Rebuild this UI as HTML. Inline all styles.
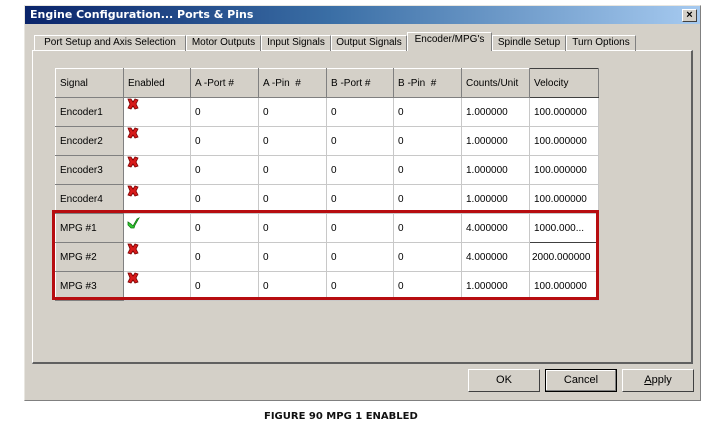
<!DOCTYPE html><html><head><style>
*{margin:0;padding:0;box-sizing:border-box}
body{width:720px;height:425px;background:#fff;position:relative;overflow:hidden;font-family:"Liberation Sans",sans-serif;font-size:10px;color:#000}
.a{position:absolute}
.win{left:24px;top:5px;width:677px;height:396px;background:#d4d0c8;border:1px solid #808080;border-top-color:#e8e6e0;border-left-color:#e8e6e0}
.title{left:25px;top:6px;width:675px;height:18px;background:linear-gradient(90deg,#0a246a,#3a6ea5 45%,#a6caf0);color:#fff;font-weight:bold;font-size:11px;line-height:18px;padding-left:5px;font-family:"DejaVu Sans",sans-serif}
.x{left:682px;top:9px;width:15px;height:13px;background:#d4d0c8;border:1px solid #404040;border-top-color:#fff;border-left-color:#fff;font-size:11px;font-weight:bold;text-align:center;line-height:11px}
.tab{top:35px;height:16px;border:1px solid #fff;border-right-color:#808080;border-bottom:none;line-height:14px;text-align:center;white-space:nowrap}
.panel{left:32px;top:50px;width:661px;height:314px;border:1px solid #fff;border-right:2px solid #606060;border-bottom:2px solid #606060}
table{position:absolute;left:55px;top:68px;border-collapse:collapse;table-layout:fixed}
td{border:1px solid #c8c8c8;height:29px;padding-left:4px;background:#fff;white-space:nowrap;overflow:hidden}
tr:first-child td{background:#d4d0c8;border-color:#808080;border-top-color:#fff;border-left-color:#fff}
td:first-child{background:#d4d0c8;border-color:#fff #808080 #808080 #fff}
.red{left:52px;top:210px;width:547px;height:90px;border:3px solid #b70d10}
.btn{top:369px;width:72px;height:23px;border:1px solid #404040;border-top-color:#fff;border-left-color:#fff;text-align:center;line-height:21px;font-size:11px}
</style></head><body>
<div class="a win"></div>
<div class="a title">Engine Configuration... Ports &amp; Pins</div>
<div class="a x">×</div>
<div class="a panel"></div>
<div class="a tab" style="left:34px;width:152px">Port Setup and Axis Selection</div>
<div class="a tab" style="left:186px;width:75px">Motor Outputs</div>
<div class="a tab" style="left:261px;width:70px">Input Signals</div>
<div class="a tab" style="left:331px;width:76px">Output Signals</div>
<div class="a tab" style="left:407px;width:85px;top:32px;height:19px;background:#d4d0c8;border-bottom:none">Encoder/MPG's</div>
<div class="a tab" style="left:492px;width:74px">Spindle Setup</div>
<div class="a tab" style="left:566px;width:70px">Turn Options</div>
<table>
<colgroup><col style="width:68px"><col style="width:67px"><col style="width:68px"><col style="width:68px"><col style="width:67px"><col style="width:68px"><col style="width:68px"><col style="width:69px"></colgroup>
<tr><td>Signal</td><td>Enabled</td><td>A -Port #</td><td>A -Pin &nbsp;#</td><td>B -Port #</td><td>B -Pin &nbsp;#</td><td>Counts/Unit</td><td style="border:1px solid #404040;border-right-color:#808080">Velocity</td></tr>
<tr><td>Encoder1</td><td></td><td>0</td><td>0</td><td>0</td><td>0</td><td>1.000000</td><td>100.000000</td></tr>
<tr><td>Encoder2</td><td></td><td>0</td><td>0</td><td>0</td><td>0</td><td>1.000000</td><td>100.000000</td></tr>
<tr><td>Encoder3</td><td></td><td>0</td><td>0</td><td>0</td><td>0</td><td>1.000000</td><td>100.000000</td></tr>
<tr><td>Encoder4</td><td></td><td>0</td><td>0</td><td>0</td><td>0</td><td>1.000000</td><td>100.000000</td></tr>
<tr><td>MPG #1</td><td></td><td>0</td><td>0</td><td>0</td><td>0</td><td>4.000000</td><td style="border:1px solid #404040">1000.000...</td></tr>
<tr><td>MPG #2</td><td></td><td>0</td><td>0</td><td>0</td><td>0</td><td>4.000000</td><td style="padding-left:2px">2000.000000</td></tr>
<tr><td>MPG #3</td><td></td><td>0</td><td>0</td><td>0</td><td>0</td><td>1.000000</td><td>100.000000</td></tr>
</table>
<svg class="a" style="left:0;top:0" width="720" height="425">
<g fill="#d71a1a" stroke="#700" stroke-width="0.8">
<path id="xx" d="M128 99l3 0 2 3 2-3 3 1-2 4 2 4-3 1-2-3-2 3-3-1 2-4z"/>
<use href="#xx" y="29"/><use href="#xx" y="58"/><use href="#xx" y="87"/><use href="#xx" y="145"/><use href="#xx" y="174"/>
</g>
<path d="M128 222l3 2 2 2 4-7 2-1-4 7-1 3-3 0-3-3z" fill="#3c3" stroke="#171" stroke-width="0.8"/>
</svg>
<div class="a red"></div>
<div class="a btn" style="left:468px">OK</div>
<div class="a btn" style="left:545px;border:1px solid #000;box-shadow:inset -1px -1px #808080,inset 1px 1px #fff">Cancel</div>
<div class="a btn" style="left:622px"><u>A</u>pply</div>
<div class="a" style="left:264px;top:411px;font-family:'DejaVu Sans',sans-serif;font-weight:bold;font-size:10px;color:#111">FIGURE 90 MPG 1 ENABLED</div>
</body></html>
